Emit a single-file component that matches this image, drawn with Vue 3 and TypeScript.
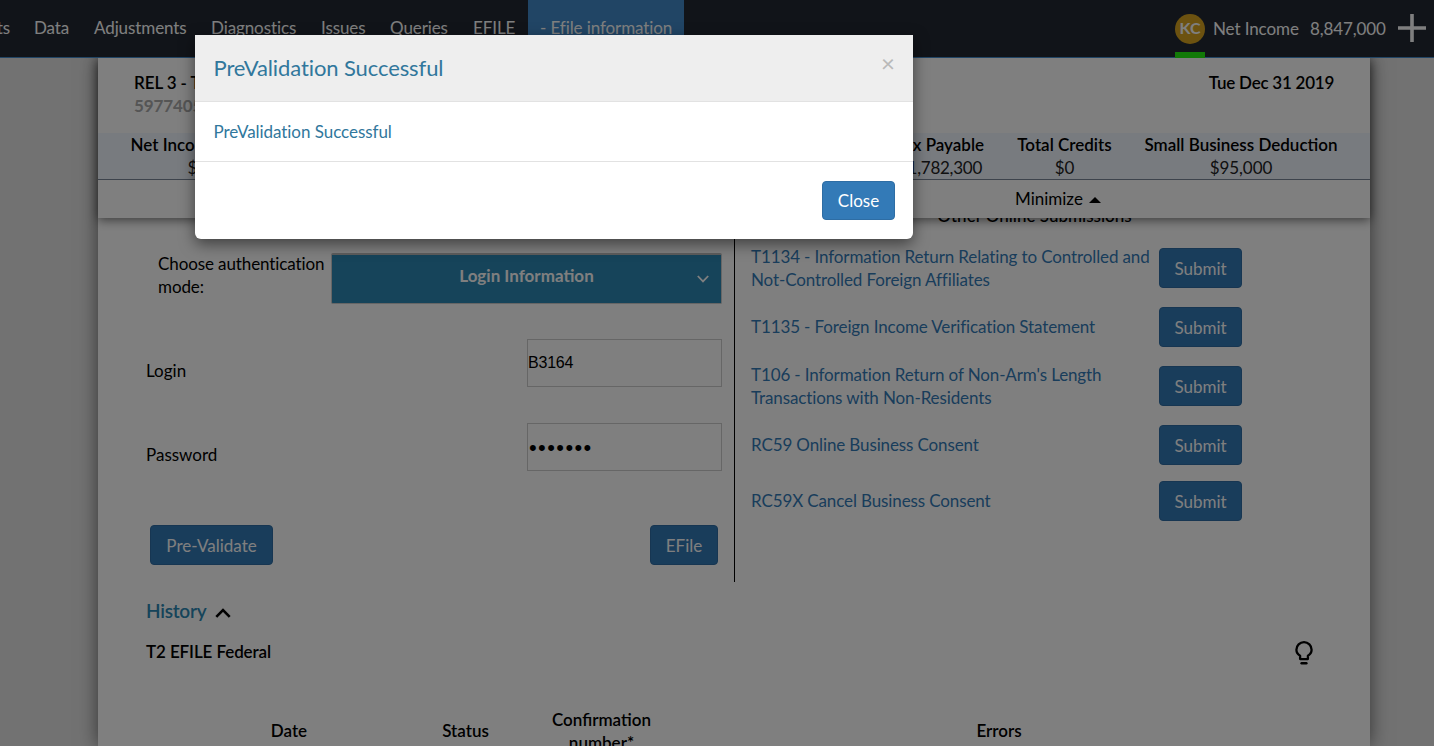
<script setup lang="ts">
interface NavItem { label: string; width: number; active?: boolean }
interface Submission { lines: string[]; height: number }

const nav: NavItem[] = [
  { label: 'ts', width: 22 },
  { label: 'Data', width: 60 },
  { label: 'Adjustments', width: 117 },
  { label: 'Diagnostics', width: 110 },
  { label: 'Issues', width: 69 },
  { label: 'Queries', width: 83 },
  { label: 'EFILE', width: 67 },
  { label: '- Efile information', width: 156, active: true },
]

const submissions: Submission[] = [
  { lines: ['T1134 - Information Return Relating to Controlled and', 'Not-Controlled Foreign Affiliates'], height: 59 },
  { lines: ['T1135 - Foreign Income Verification Statement'], height: 59 },
  { lines: ["T106 - Information Return of Non-Arm's Length", 'Transactions with Non-Residents'], height: 59 },
  { lines: ['RC59 Online Business Consent'], height: 56 },
  { lines: ['RC59X Cancel Business Consent'], height: 56 },
]
</script>

<template>
  <div class="app">
    <header class="topbar">
      <nav class="nav">
        <a v-for="n in nav" :key="n.label" class="nav-item" :class="{ active: n.active }" :style="{ width: n.width + 'px' }">{{ n.label }}</a>
      </nav>
      <div class="user">
        <div class="presence"><span class="avatar">KC</span><i class="status-bar"></i></div>
        <span class="ni-label">Net Income</span>
        <span class="ni-value">8,847,000</span>
        <svg class="plus" width="28" height="28" viewBox="0 0 28 28"><path d="M14 0v28M0 14h28" stroke="#fff" stroke-width="3.6" /></svg>
      </div>
    </header>

    <main class="page">
      <section class="summary">
        <div class="client">
          <div>
            <div class="client-name">REL 3 - T2</div>
            <div class="client-number">5977405</div>
          </div>
          <div class="year-end">Tue Dec 31 2019</div>
        </div>
        <div class="figures">
          <div class="figure first"><b>Net Income</b><span>$8,847,000</span></div>
          <div class="figure tax"><b>Tax Payable</b><span>$1,782,300</span></div>
          <div class="figure credits"><b>Total Credits</b><span>$0</span></div>
          <div class="figure sbd"><b>Small Business Deduction</b><span>$95,000</span></div>
        </div>
        <div class="minimize"><span>Minimize</span><i class="caret"></i></div>
      </section>

      <section class="columns">
        <form class="login">
          <div class="auth">
            <label>Choose authentication mode:</label>
            <div class="select">
              <span>Login Information</span>
              <svg width="12" height="8" viewBox="0 0 12 8"><path d="M.8 1 6 6.4 11.2 1" fill="none" stroke="#fff" stroke-width="1.8" /></svg>
            </div>
          </div>
          <div class="field login-field"><label>Login</label><input type="text" value="B3164" /></div>
          <div class="field"><label>Password</label><input class="secret" type="password" value="secrets" /></div>
          <div class="actions">
            <button type="button" class="btn prevalidate">Pre-Validate</button>
            <button type="button" class="btn efile">EFile</button>
          </div>
        </form>
        <div class="online">
          <h3>Other Online Submissions</h3>
          <div v-for="s in submissions" :key="s.lines[0]" class="submission" :style="{ height: s.height + 'px' }">
            <a :class="{ single: s.lines.length === 1 }"><span v-for="l in s.lines" :key="l">{{ l }}</span></a>
            <button type="button" class="btn submit">Submit</button>
          </div>
        </div>
      </section>

      <section class="history">
        <h2><span>History</span>
          <svg width="16" height="10" viewBox="0 0 16 10"><path d="M1.3 8.8 8 2l6.7 6.8" fill="none" stroke="#000" stroke-width="2.6" /></svg>
        </h2>
        <div class="federal">
          <span>T2 EFILE Federal</span>
          <svg width="18" height="24" viewBox="0 0 18 24"><path d="M5.1 18.1v-3.3C2.6 13.3 1.4 11.3 1.4 8.8a7.6 7.6 0 0 1 15.2 0c0 2.5-1.2 4.5-3.7 6v3.3z" fill="none" stroke="#000" stroke-width="2.3" stroke-linejoin="round" /><path d="M6.6 22.2h4.8" stroke="#000" stroke-width="2.4" stroke-linecap="round" /></svg>
        </div>
        <div class="table-head">
          <span>Date</span><span>Status</span><span class="confirm">Confirmation<br />number*</span><span>Errors</span>
        </div>
      </section>
    </main>

    <div class="backdrop">
      <div class="modal">
        <div class="modal-header"><h4>PreValidation Successful</h4><button type="button" class="x">×</button></div>
        <div class="modal-body">PreValidation Successful</div>
        <div class="modal-footer"><button type="button" class="btn close">Close</button></div>
      </div>
    </div>
  </div>
</template>

<style>
html, body { height: 746px; overflow: hidden; }
</style>

<style scoped>
.app { position: relative; width: 1434px; height: 746px; overflow: hidden; background: #e4e4e4; font-family: Lato, "Liberation Sans", sans-serif; font-size: 17px; line-height: 23px; letter-spacing: -.1px; color: #000; }
.app * { box-sizing: border-box; }
h2, h3, h4 { margin: 0; font-weight: 600; }
.topbar { position: relative; z-index: 3; display: flex; justify-content: space-between; height: 58px; background: #222933; border-bottom: 1px solid #428bca; color: #fff; }
.nav { display: flex; height: 57px; }
.nav-item { display: flex; align-items: center; padding: 0 0 2px 12px; white-space: nowrap; }
.nav-item:first-child { justify-content: flex-end; padding: 0 12px 2px 0; }
.nav-item.active { background: #428bca; }
.user { display: flex; align-items: center; height: 57px; padding-right: 8px; }
.presence { display: flex; flex-direction: column; align-items: center; width: 30px; height: 58px; margin: 1px 8px 0 0; padding-top: 14px; }
.avatar { display: flex; align-items: center; justify-content: center; width: 30px; height: 30px; padding-bottom: 3px; border-radius: 50%; background: #d9a520; font-size: 16px; font-weight: 700; }
.status-bar { width: 30px; height: 6px; margin-top: 8px; background: #22f20e; }
.ni-label { width: 97px; white-space: nowrap; }
.ni-value { width: 88px; white-space: nowrap; }
.plus { margin-bottom: 1px; }
.page { width: 1272px; height: 688px; margin-left: 98px; background: #fff; box-shadow: 0 0 18px rgba(0, 0, 0, .55); }
.summary { position: relative; z-index: 2; height: 160px; background: #fff; box-shadow: 0 2px 10px rgba(0, 0, 0, .55); }
.client { display: flex; justify-content: space-between; height: 75px; padding: 13px 36px 0; font-weight: 600; }
.client-number { color: #aaa; font-weight: 700; }
.year-end { letter-spacing: -.25px; }
.figures { display: flex; height: 47px; background: #f0f6ff; border-bottom: 1px solid #7b8798; }
.figure { display: flex; flex-direction: column; align-items: center; white-space: nowrap; }
.figure b { font-weight: 600; letter-spacing: 0; }
.figure span { color: #222; }
.figure.first { width: 186px; padding-left: 32.5px; align-items: flex-start; }
.figure.first span { padding-left: 57px; }
.figure.tax { width: 120px; margin-left: 596px; }
.figure.tax span { letter-spacing: -.25px; }
.figure.credits { width: 125px; margin-left: 2px; }
.figure.sbd { width: 228px; }
.minimize { display: flex; align-items: center; height: 36px; padding-left: 917px; letter-spacing: 0; }
.caret { margin: 3px 0 0 6px; border: 6px solid transparent; border-top: 0; border-bottom-color: #000; }
.columns { display: flex; height: 364px; }
.login { width: 637px; border-right: 1px solid #000; }
.auth { display: flex; padding: 35px 0 0 60px; }
.auth label { width: 173px; margin-top: -1px; }
.select { position: relative; display: flex; justify-content: center; width: 391px; height: 51px; padding-top: 9px; background: #2c88b4; border: 1px solid #ccc; border-top: 2px solid #bbb; border-radius: 2px; color: #fff; font-weight: 700; letter-spacing: 0; }
.select svg { position: absolute; right: 12px; top: 20px; }
.field { display: flex; justify-content: space-between; width: 576px; margin: 36px 0 0 48px; }
.login-field { margin-top: 35px; }
.field label { padding-top: 20px; letter-spacing: 0; }
.field input { width: 195px; height: 48px; padding: 1px 1px 1px 0; border: 1px solid #ccc; border-radius: 0; background: #fff; color: #000; font: 16px "Liberation Sans", Arial, sans-serif; letter-spacing: -.2px; outline: 0; }
.field .secret { padding: 3px 1px 1px; font-size: 22px; letter-spacing: 1.4px; }
.actions { display: flex; justify-content: space-between; width: 568px; margin: 54px 0 0 52px; }
.btn { display: flex; align-items: center; justify-content: center; height: 40px; padding: 0; border: 1px solid #2e6da4; border-radius: 4px; background: #337ab7; color: #fff; font: 17px Lato, sans-serif; }
.prevalidate { width: 123px; }
.efile { width: 68px; }
.online { width: 635px; margin-top: -14px; padding-left: 16px; }
.online h3 { width: 567px; height: 44px; text-align: center; font-size: 17px; font-weight: 500; letter-spacing: 0; }
.submission { display: flex; }
.submission a { width: 408px; margin-top: -3px; color: #337ab7; white-space: nowrap; letter-spacing: -.12px; }
.submission a.single { margin-top: 8px; }
.submission a span { display: block; }
.submit { width: 83px; }
.history { padding: 0 48px; }
.history h2 { display: flex; align-items: center; height: 56px; margin-bottom: 2px; font-size: 19px; letter-spacing: -.25px; color: #2c88b4; }
.history h2 svg { margin: 6px 0 0 8.5px; }
.federal { display: flex; align-items: center; justify-content: space-between; height: 26px; padding-right: 9px; font-weight: 600; }
.federal span { margin-top: -3px; }
.table-head { display: grid; grid-template-columns: 286px 67px 205px 590px; margin-top: 42px; align-items: center; text-align: center; font-weight: 600; letter-spacing: 0; }
.table-head span:not(.confirm) { margin-top: -1px; }
.backdrop { position: absolute; inset: 0; z-index: 10; padding: 35px 0 0 195px; background: rgba(0, 0, 0, .5); }
.modal { width: 718px; height: 204px; background: #fff; border-radius: 0 0 6px 6px; box-shadow: 0 5px 15px rgba(0, 0, 0, .5); color: #31779c; }
.modal-header { display: flex; justify-content: space-between; height: 67px; padding: 19px 19px 0 18.5px; background: #eee; border-bottom: 1px solid #e2e2e2; }
.modal-header h4 { font-size: 22px; font-weight: 400; line-height: 27px; }
.x { width: 13px; height: 20px; margin-top: -1px; padding: 0; border: 0; background: none; color: #b9b9b9; font: 24px/20px Lato, sans-serif; }
.modal-body { height: 60px; padding: 18px 18.5px; border-bottom: 1px solid #e2e2e2; letter-spacing: -.05px; }
.modal-footer { display: flex; justify-content: flex-end; padding: 19px 18px; }
.close { width: 73px; height: 39px; padding-bottom: 1px; }
</style>
